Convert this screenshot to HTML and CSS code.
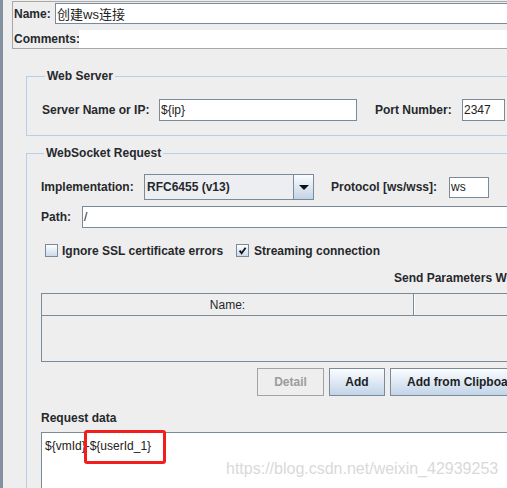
FILE: index.html
```html
<!DOCTYPE html>
<html>
<head>
<meta charset="utf-8">
<link rel="stylesheet" href="styles.css">
</head>
<body>
<div class="app">
  <div class="strip"></div>
  <div class="main">
    <div class="top-box">
      <div class="row name-row">
        <span class="lbl name-lbl">Name:</span>
        <div class="field name-field">创建ws连接</div>
      </div>
      <div class="row comments-row">
        <span class="lbl comments-lbl">Comments:</span>
        <div class="comments-field"></div>
      </div>
    </div>

    <fieldset class="group server-group">
      <legend>Web Server</legend>
      <div class="row server-row">
        <span class="lbl server-lbl">Server Name or IP:</span>
        <div class="field server-field">${ip}</div>
        <span class="lbl port-lbl">Port Number:</span>
        <div class="field port-field">2347</div>
      </div>
    </fieldset>

    <fieldset class="group ws-group">
      <legend>WebSocket Request</legend>
      <div class="row impl-row">
        <span class="lbl impl-lbl">Implementation:</span>
        <div class="combo">
          <span class="combo-text">RFC6455 (v13)</span>
          <span class="combo-btn"><svg width="10" height="5" viewBox="0 0 10 5"><path d="M0 0 H10 L5 5 Z" fill="#111"/></svg></span>
        </div>
        <span class="lbl proto-lbl">Protocol [ws/wss]:</span>
        <div class="field proto-field">ws</div>
      </div>
      <div class="row path-row">
        <span class="lbl path-lbl">Path:</span>
        <div class="field path-field">/</div>
      </div>
      <div class="row check-row">
        <label class="check check-ssl"><span class="cb"></span><span class="lbl">Ignore SSL certificate errors</span></label>
        <label class="check"><span class="cb"><svg width="11" height="11" viewBox="0 0 11 11"><path d="M2.6 5.6 L4.6 8.2 L8.6 2.8" fill="none" stroke="#111" stroke-width="1.8"/></svg></span><span class="lbl">Streaming connection</span></label>
      </div>
      <div class="send-title lbl">Send Parameters With the Request:</div>
      <div class="table">
        <div class="thead">
          <div class="th th-name">Name:</div>
          <div class="th th-value">Value</div>
        </div>
        <div class="tbody"></div>
      </div>
      <div class="buttons">
        <button class="btn btn-detail" disabled>Detail</button>
        <button class="btn btn-add">Add</button>
        <button class="btn">Add from Clipboard</button>
        <button class="btn">Delete</button>
        <button class="btn">Up</button>
        <button class="btn">Down</button>
      </div>
      <div class="lbl req-label">Request data</div>
      <div class="textarea">${vmId}-${userId_1}</div>
    </fieldset>
  </div>
</div>
<div class="highlight"></div>
<div class="watermark">https://blog.csdn.net/weixin_42939253</div>
</body>
</html>
```

FILE: styles.css
```css
html, body {
  margin: 0;
  padding: 0;
}
body {
  width: 507px;
  height: 488px;
  overflow: hidden;
  background: #eeeeee;
  font-family: "Liberation Sans", Arial, "Noto Sans CJK SC", sans-serif;
  font-size: 12px;
  color: #222;
  position: relative;
}
.app {
  display: flex;
  height: 488px;
}
.strip {
  flex: none;
  width: 3px;
  background: #8390a0;
}
.main {
  flex: none;
  width: 780px;
  display: flex;
  flex-direction: column;
}
.row {
  display: flex;
  align-items: center;
}
.lbl {
  font-weight: bold;
  color: #26282c;
  white-space: nowrap;
}
.field {
  box-sizing: border-box;
  background: #fff;
  border: 1px solid #7a8a99;
  padding-left: 1px;
  white-space: nowrap;
  display: flex;
  align-items: center;
  color: #222;
}

/* top box */
.top-box {
  box-sizing: border-box;
  margin: 1px 0 0 9px;
  height: 48px;
  border: 1px solid #a8a8a8;
  border-right: none;
}
.name-row {
  margin-top: 1px;
  height: 21px;
}
.name-lbl {
  box-sizing: border-box;
  width: 42px;
  padding-left: 1px;
  flex: none;
}
.name-field {
  flex: 1;
  height: 21px;
  font-family: "Liberation Sans", Arial, "Noto Sans CJK SC", sans-serif;
  font-size: 13px;
}
.comments-row {
  margin-top: 6px;
  height: 18px;
}
.comments-lbl {
  box-sizing: border-box;
  width: 66px;
  padding-left: 1px;
  flex: none;
}
.comments-field {
  flex: 1;
  height: 18px;
  background: #fff;
}

/* groups */
.group {
  margin: 0 0 0 23px;
  padding: 0;
  border: 1px solid #b8cfe5;
  border-right: none;
  min-width: 0;
}
.group legend {
  margin-left: 3px;
  padding: 0 2px;
  font-weight: bold;
  line-height: 15px;
  color: #26282c;
}
.server-group {
  margin-top: 20px;
  padding: 15px 0 14px 15px;
}
.server-row {
  height: 22px;
}
.server-lbl {
  width: 117px;
  flex: none;
}
.server-field {
  width: 198px;
  height: 22px;
  flex: none;
}
.port-lbl {
  margin-left: 18px;
  width: 87px;
  flex: none;
}
.port-field {
  width: 43px;
  height: 22px;
  flex: none;
}

.ws-group {
  margin-top: 10px;
  padding: 0 0 0 14px;
}
.impl-row {
  margin-top: 13px;
  height: 26px;
}
.impl-lbl {
  width: 103px;
  flex: none;
}
.combo {
  box-sizing: border-box;
  flex: none;
  width: 170px;
  height: 26px;
  border: 1px solid #7a8a99;
  background: #eceef2;
  display: flex;
}
.combo-text {
  flex: 1;
  display: flex;
  align-items: center;
  padding-left: 2px;
  font-weight: bold;
  color: #26282c;
}
.combo-btn {
  flex: none;
  width: 19px;
  border-left: 1px solid #7a8a99;
  background: linear-gradient(#fafcff, #c3d3e6);
  display: flex;
  align-items: center;
  justify-content: center;
}
.proto-lbl {
  margin-left: 17px;
  width: 118px;
  flex: none;
}
.proto-field {
  width: 40px;
  height: 21px;
  flex: none;
}
.path-row {
  margin-top: 6px;
  height: 22px;
}
.path-lbl {
  width: 41px;
  flex: none;
}
.path-field {
  flex: 1;
  height: 22px;
}
.check-row {
  margin-top: 16px;
  height: 13px;
  padding-left: 4px;
}
.check {
  display: flex;
  align-items: center;
  gap: 5px;
}
.check-ssl {
  width: 191px;
  gap: 4px;
}
.cb {
  box-sizing: border-box;
  width: 13px;
  height: 13px;
  border: 1px solid #7a8a99;
  background: linear-gradient(#fdfeff, #ccdaeb);
  display: flex;
  align-items: center;
  justify-content: center;
}
.send-title {
  margin-top: 14px;
  line-height: 14px;
  padding-left: 353px;
}
.table {
  margin-top: 8px;
  border-top: 1px solid #7a8a99;
  border-left: 1px solid #7a8a99;
  border-bottom: 1px solid #7a8a99;
}
.thead {
  display: flex;
  height: 21px;
  border-bottom: 1px solid #7a8a99;
}
.th {
  display: flex;
  align-items: center;
  justify-content: center;
  color: #26282c;
  background: #eeeeee;
}
.th-name {
  width: 371px;
  border-right: 1px solid #7a8a99;
}
.th-value {
  flex: 1;
  box-shadow: inset 1px 0 #ffffff;
}
.tbody {
  height: 45px;
  background: #eeeeee;
}
.buttons {
  margin-top: 6px;
  padding-left: 216px;
  display: flex;
  gap: 5px;
}
.btn {
  box-sizing: border-box;
  height: 28px;
  margin: 0;
  padding: 0 16px;
  border: 1px solid #7a8a99;
  background: linear-gradient(#fbfdff, #c2d4e8);
  font-family: "Liberation Sans", Arial, sans-serif;
  font-size: 12px;
  font-weight: bold;
  color: #1c1f24;
  white-space: nowrap;
}
.btn-detail {
  width: 67px;
  padding: 0;
  background: #eeeeee;
  border-color: #a3a3a3;
  color: #9c9c9c;
}
.btn-add {
  width: 56px;
  padding: 0;
}
.req-label {
  margin-top: 15px;
  line-height: 14px;
}
.textarea {
  margin-top: 7px;
  height: 140px;
  background: #fff;
  border-top: 1px solid #7a8a99;
  border-left: 1px solid #7a8a99;
  padding: 6px 0 0 3px;
  line-height: 14px;
  font-size: 12px;
  color: #222;
}

/* overlays */
.highlight {
  position: absolute;
  left: 84px;
  top: 430px;
  width: 82px;
  height: 34px;
  box-sizing: border-box;
  border: 3px solid #f21d1d;
  border-radius: 3px;
}
.watermark {
  position: absolute;
  left: 226px;
  top: 460px;
  font-size: 16px;
  line-height: 18px;
  color: #d9d9d9;
  white-space: nowrap;
}
```
